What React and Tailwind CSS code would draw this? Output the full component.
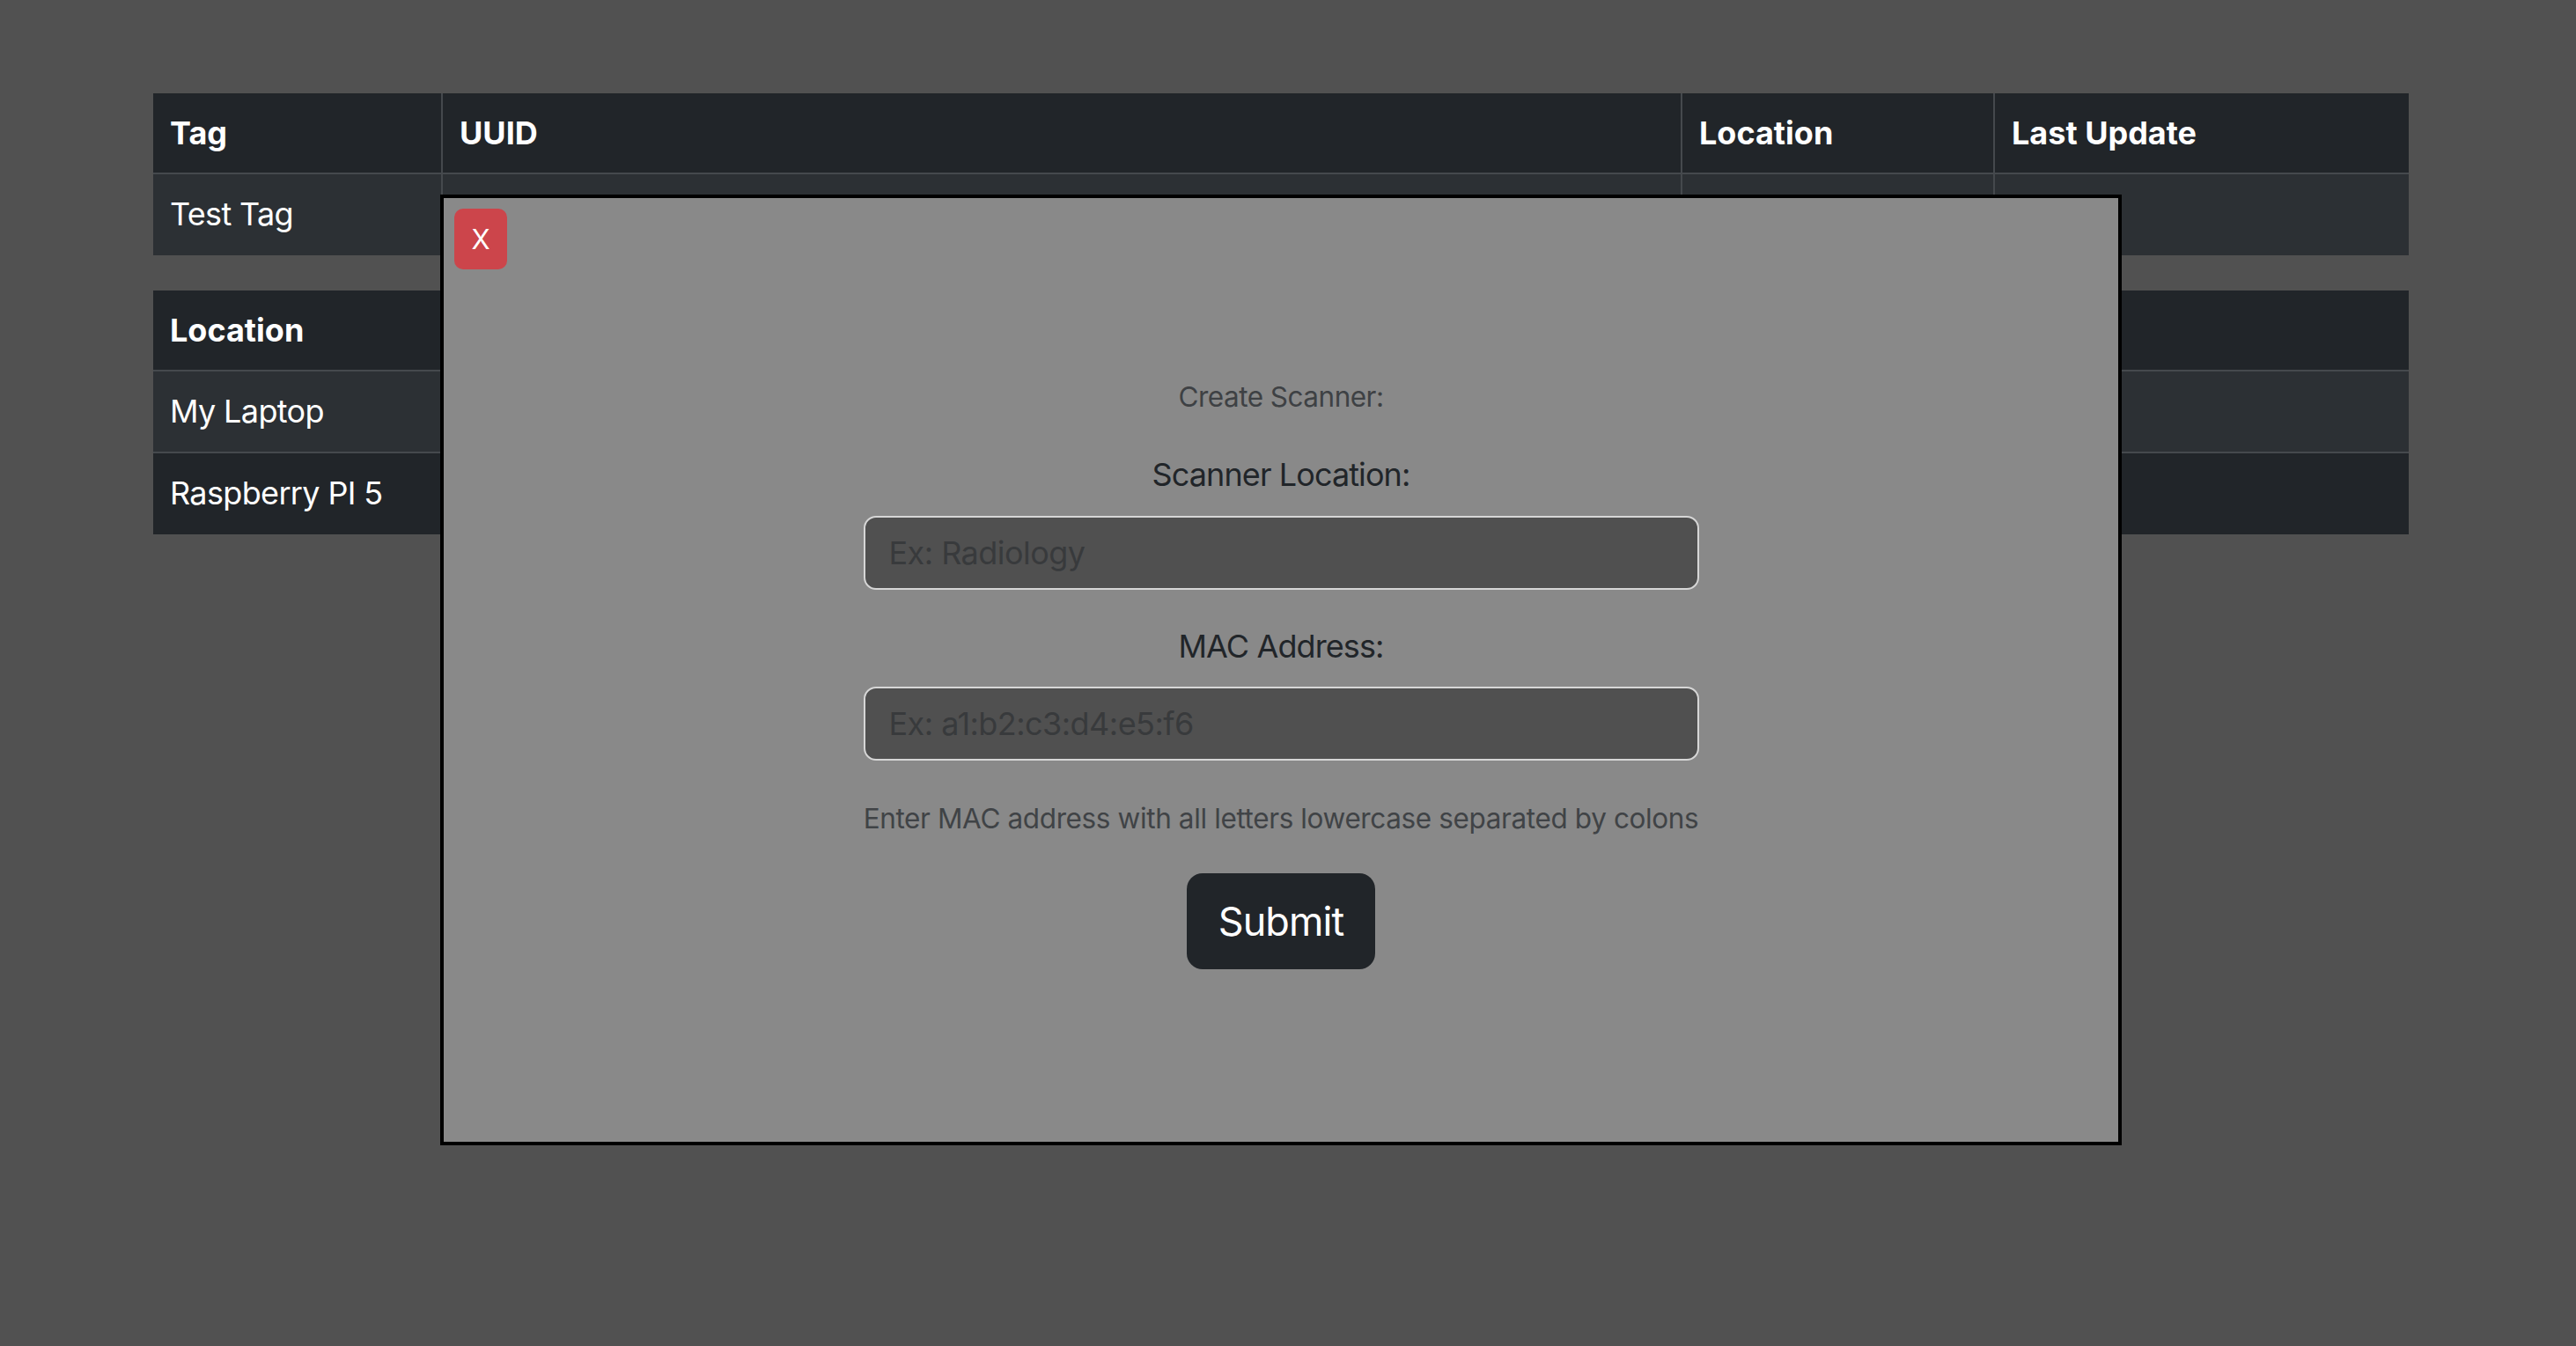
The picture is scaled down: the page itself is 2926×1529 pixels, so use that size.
import React from "react";

const tagRows = [{ tag: "Test Tag", uuid: "", location: "", updated: "" }];
const locations = ["My Laptop", "Raspberry PI 5"];

function Cell({ children, className = "" }) {
	return (
		<div className={`px-[19px] py-[18px] leading-[54px] ${className}`}>
			{children}
		</div>
	);
}

export default function App() {
	return (
		<div
			className="relative min-h-[1529px] w-full bg-[#515151] pt-[106px] text-[36px] text-white"
			style={{ fontFamily: "Inter, 'Noto Sans', sans-serif" }}
		>
			{/* Tableau des tags */}
			<div className="mx-[174px] w-[2562px]">
				<div className="flex bg-[#212529] border-b-2 border-[#45494d] font-bold">
					<Cell className="h-[90px] w-[329px] border-r-2 border-[#45494d]">Tag</Cell>
					<Cell className="h-[90px] w-[1408px] border-r-2 border-[#45494d]">UUID</Cell>
					<Cell className="h-[90px] w-[355px] border-r-2 border-[#45494d]">Location</Cell>
					<Cell className="h-[90px] flex-1">Last Update</Cell>
				</div>
				{tagRows.map((row) => (
					<div key={row.tag} className="flex bg-[#2c3034] tracking-[-0.018em]">
						<Cell className="h-[92px] w-[329px] border-r-2 border-[#45494d]">{row.tag}</Cell>
						<Cell className="h-[92px] w-[1408px] border-r-2 border-[#45494d]">{row.uuid}</Cell>
						<Cell className="h-[92px] w-[355px] border-r-2 border-[#45494d]">{row.location}</Cell>
						<Cell className="h-[92px] flex-1">{row.updated}</Cell>
					</div>
				))}
			</div>

			{/* Tableau des scanners */}
			<div className="mx-[174px] mt-[40px] w-[2562px]">
				<div className="bg-[#212529] border-b-2 border-[#45494d] font-bold">
					<Cell className="h-[90px]">Location</Cell>
				</div>
				{locations.map((loc, i) => (
					<div
						key={loc}
						className={
							i % 2 === 0
								? "bg-[#2c3034] border-b-2 border-[#45494d] tracking-[-0.018em]"
								: "bg-[#212529] tracking-[-0.018em]"
						}
					>
						<Cell className={i % 2 === 0 ? "h-[91px]" : "h-[92px]"}>{loc}</Cell>
					</div>
				))}
			</div>

			{/* Modale de création */}
			<div className="absolute left-[500px] top-[221px] w-[1910px] h-[1080px] border-4 border-black bg-[#898989]">
				<button className="absolute left-3 top-3 w-[60px] h-[69px] rounded-[10px] bg-[#cc454b] text-[31px] leading-none text-white">
					X
				</button>
				<div className="flex flex-col items-center pt-[202px]">
					<p className="text-[31.5px] leading-[47px] tracking-[-0.016em] text-[#3e4144]">
						Create Scanner:
					</p>
					<label className="mt-[38px] text-[36px] leading-[54px] tracking-[-0.025em] text-[#212529]">
						Scanner Location:
					</label>
					<input
						className="mt-[20px] w-[949px] h-[84px] rounded-[14px] border-2 border-[#d6d6d6] bg-[#505050] px-[27px] text-[36px] tracking-[-0.015em] text-[#212529] placeholder:text-[#383a3c] outline-none"
						placeholder="Ex: Radiology"
					/>
					<label className="mt-[37px] text-[36px] leading-[54px] tracking-[-0.025em] text-[#212529]">
						MAC Address:
					</label>
					<input
						className="mt-[19px] w-[949px] h-[84px] rounded-[14px] border-2 border-[#d6d6d6] bg-[#505050] px-[27px] text-[36px] tracking-[-0.015em] text-[#212529] placeholder:text-[#383a3c] outline-none"
						placeholder="Ex: a1:b2:c3:d4:e5:f6"
					/>
					<p className="mt-[42px] text-[31.5px] leading-[47px] tracking-[-0.012em] text-[#404346]">
						Enter MAC address with all letters lowercase separated by colons
					</p>
					<button className="mt-[39px] h-[109px] rounded-[18px] bg-[#212529] px-[36px] text-[45px] tracking-[-0.02em] text-white">
						Submit
					</button>
				</div>
			</div>
		</div>
	);
}
